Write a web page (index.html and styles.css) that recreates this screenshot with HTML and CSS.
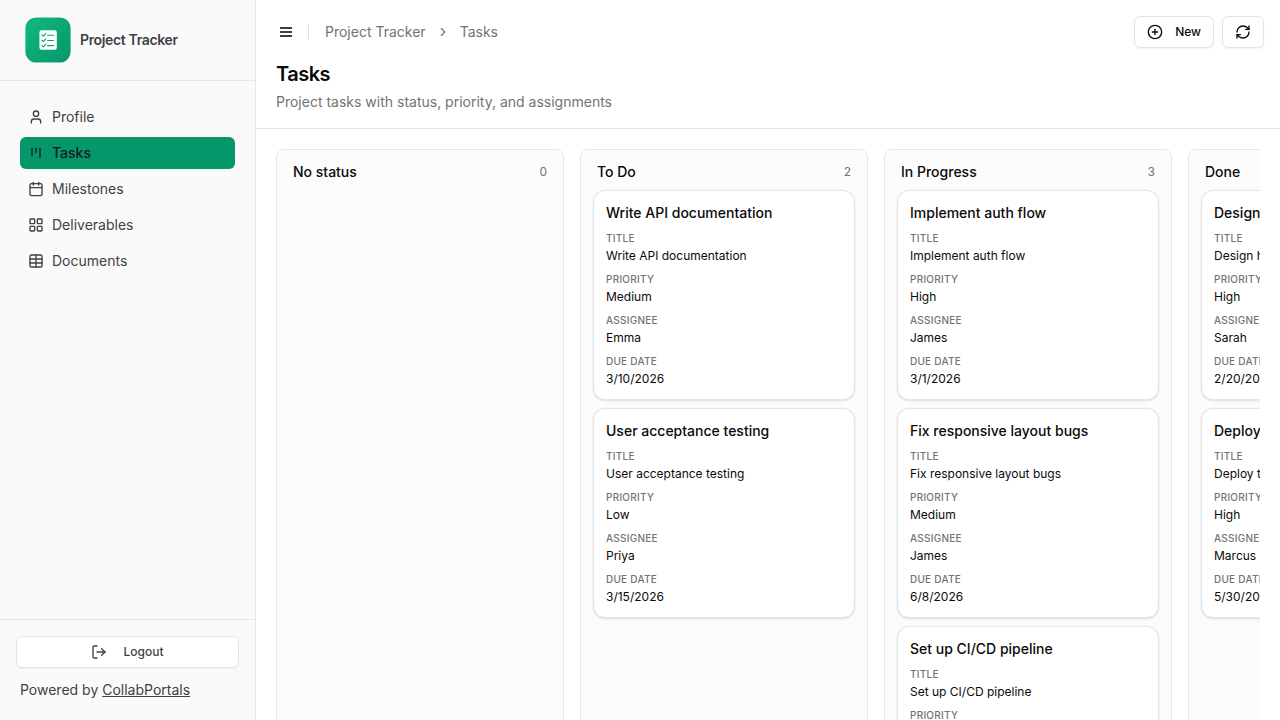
FILE: index.html
```html
<!DOCTYPE html>
<html lang="en">
<head>
    <meta charset="UTF-8">
    <meta name="viewport" content="width=device-width, initial-scale=1.0">
    <title>Tasks - Project Tracker</title>
    <link rel="stylesheet" href="styles.css">
</head>
<body>
    <div class="app">
        <aside class="sidebar">
            <div class="sidebar-header">
                <svg class="logo" viewBox="0 0 48 48">
                    <defs>
                        <linearGradient id="logoFill" x1="0" y1="0" x2="1" y2="1">
                            <stop offset="0" stop-color="#10b981"/>
                            <stop offset="1" stop-color="#059669"/>
                        </linearGradient>
                    </defs>
                    <rect x="1.4" y="1.4" width="45.2" height="45.2" rx="11" fill="url(#logoFill)"/>
                    <rect x="15.4" y="14.2" width="17.4" height="19.6" rx="2" fill="#fff"/>
                    <path d="M18 18.8l1.4 1.4 2.4-2.8M18 24.2l1.4 1.4 2.4-2.8M18 29.4l1.4 1.4 2.4-2.8M23.6 19.2h6M23.6 24.5h6M23.6 29.6h6" fill="none" stroke="#0a9f70" stroke-width="1.1" stroke-linecap="round" stroke-linejoin="round"/>
                </svg>
                <span class="brand">Project Tracker</span>
            </div>

            <nav class="nav">
                <a class="nav-item">
                    <svg class="icon" viewBox="0 0 24 24"><circle cx="12" cy="7" r="4"/><path d="M19 21v-2a4 4 0 0 0-4-4H9a4 4 0 0 0-4 4v2"/></svg>
                    Profile
                </a>
                <a class="nav-item active">
                    <svg class="icon" viewBox="0 0 24 24"><path d="M6 5v11"/><path d="M12 5v6"/><path d="M18 5v14"/></svg>
                    Tasks
                </a>
                <a class="nav-item">
                    <svg class="icon" viewBox="0 0 24 24"><path d="M8 2v4"/><path d="M16 2v4"/><rect width="18" height="18" x="3" y="4" rx="2"/><path d="M3 10h18"/></svg>
                    Milestones
                </a>
                <a class="nav-item">
                    <svg class="icon" viewBox="0 0 24 24"><rect width="7" height="7" x="3" y="3" rx="1"/><rect width="7" height="7" x="14" y="3" rx="1"/><rect width="7" height="7" x="14" y="14" rx="1"/><rect width="7" height="7" x="3" y="14" rx="1"/></svg>
                    Deliverables
                </a>
                <a class="nav-item">
                    <svg class="icon" viewBox="0 0 24 24"><path d="M12 3v18"/><rect width="18" height="18" x="3" y="3" rx="2"/><path d="M3 9h18"/><path d="M3 15h18"/></svg>
                    Documents
                </a>
            </nav>

            <div class="sidebar-footer">
                <button class="btn logout">
                    <svg class="icon" viewBox="0 0 24 24"><path d="M9 21H5a2 2 0 0 1-2-2V5a2 2 0 0 1 2-2h4"/><path d="m16 17 5-5-5-5"/><path d="M21 12H9"/></svg>
                    Logout
                </button>
                <p class="powered">Powered by <a>CollabPortals</a></p>
            </div>
        </aside>

        <main class="main">
            <header class="page-header">
                <div class="topbar">
                    <svg class="menu" viewBox="0 0 16 16"><path d="M2 3h12v2H2zM2 7h12v2H2zM2 11h12v2H2z"/></svg>
                    <span class="divider"></span>
                    <div class="breadcrumb">
                        <span>Project Tracker</span>
                        <svg class="icon chevron" viewBox="0 0 24 24"><path d="m9 18 6-6-6-6"/></svg>
                        <span>Tasks</span>
                    </div>
                    <div class="actions">
                        <button class="btn">
                            <svg class="icon" viewBox="0 0 24 24"><circle cx="12" cy="12" r="10"/><path d="M8 12h8"/><path d="M12 8v8"/></svg>
                            New
                        </button>
                        <button class="btn">
                            <svg class="icon" viewBox="0 0 24 24"><path d="M3 12a9 9 0 0 1 9-9 9.75 9.75 0 0 1 6.74 2.74L21 8"/><path d="M21 3v5h-5"/><path d="M21 12a9 9 0 0 1-9 9 9.75 9.75 0 0 1-6.74-2.74L3 16"/><path d="M8 16H3v5"/></svg>
                        </button>
                    </div>
                </div>
                <h1>Tasks</h1>
                <p class="description">Project tasks with status, priority, and assignments</p>
            </header>

            <div class="board-wrap">
                <div class="board">
                    <section class="column">
                        <div class="column-header"><h2>No status</h2><span class="count">0</span></div>
                    </section>

                    <section class="column">
                        <div class="column-header"><h2>To Do</h2><span class="count">2</span></div>
                        <article class="card">
                            <h3>Write API documentation</h3>
                            <dl>
                                <dt>Title</dt><dd>Write API documentation</dd>
                                <dt>Priority</dt><dd>Medium</dd>
                                <dt>Assignee</dt><dd>Emma</dd>
                                <dt>Due date</dt><dd>3/10/2026</dd>
                            </dl>
                        </article>
                        <article class="card">
                            <h3>User acceptance testing</h3>
                            <dl>
                                <dt>Title</dt><dd>User acceptance testing</dd>
                                <dt>Priority</dt><dd>Low</dd>
                                <dt>Assignee</dt><dd>Priya</dd>
                                <dt>Due date</dt><dd>3/15/2026</dd>
                            </dl>
                        </article>
                    </section>

                    <section class="column">
                        <div class="column-header"><h2>In Progress</h2><span class="count">3</span></div>
                        <article class="card">
                            <h3>Implement auth flow</h3>
                            <dl>
                                <dt>Title</dt><dd>Implement auth flow</dd>
                                <dt>Priority</dt><dd>High</dd>
                                <dt>Assignee</dt><dd>James</dd>
                                <dt>Due date</dt><dd>3/1/2026</dd>
                            </dl>
                        </article>
                        <article class="card">
                            <h3>Fix responsive layout bugs</h3>
                            <dl>
                                <dt>Title</dt><dd>Fix responsive layout bugs</dd>
                                <dt>Priority</dt><dd>Medium</dd>
                                <dt>Assignee</dt><dd>James</dd>
                                <dt>Due date</dt><dd>6/8/2026</dd>
                            </dl>
                        </article>
                        <article class="card">
                            <h3>Set up CI/CD pipeline</h3>
                            <dl>
                                <dt>Title</dt><dd>Set up CI/CD pipeline</dd>
                                <dt>Priority</dt><dd>High</dd>
                            </dl>
                        </article>
                    </section>

                    <section class="column">
                        <div class="column-header"><h2>Done</h2></div>
                        <article class="card">
                            <h3>Design homepage</h3>
                            <dl>
                                <dt>Title</dt><dd>Design homepage</dd>
                                <dt>Priority</dt><dd>High</dd>
                                <dt>Assignee</dt><dd>Sarah</dd>
                                <dt>Due date</dt><dd>2/20/2026</dd>
                            </dl>
                        </article>
                        <article class="card">
                            <h3>Deploy to staging</h3>
                            <dl>
                                <dt>Title</dt><dd>Deploy to staging</dd>
                                <dt>Priority</dt><dd>High</dd>
                                <dt>Assignee</dt><dd>Marcus</dd>
                                <dt>Due date</dt><dd>5/30/2026</dd>
                            </dl>
                        </article>
                    </section>
                </div>
            </div>
        </main>
    </div>
</body>
</html>
```
FILE: styles.css
```css
* {
    margin: 0;
    padding: 0;
    box-sizing: border-box;
}

body {
    font-family: Inter, sans-serif;
    font-size: 14px;
    line-height: 20px;
    color: #0a0a0a;
    background: #fff;
    overflow: hidden;
}

.app {
    display: flex;
    height: 100vh;
}

.icon {
    width: 16px;
    height: 16px;
    flex-shrink: 0;
    fill: none;
    stroke: currentColor;
    stroke-width: 2;
    stroke-linecap: round;
    stroke-linejoin: round;
}

.btn {
    display: flex;
    align-items: center;
    justify-content: center;
    gap: 12px;
    height: 32px;
    padding: 0 12px;
    font-family: inherit;
    font-size: 12px;
    font-weight: 500;
    line-height: 16px;
    color: inherit;
    background: #fff;
    border: 1px solid #e5e5e5;
    border-radius: 6px;
    box-shadow: 0 1px 2px rgba(0, 0, 0, 0.05);
}

/* Sidebar */
.sidebar {
    display: flex;
    flex-direction: column;
    width: 256px;
    flex-shrink: 0;
    color: #3f3f46;
    background: #fafafa;
    border-right: 1px solid #e5e7eb;
}

.sidebar-header {
    display: flex;
    align-items: center;
    gap: 8px;
    height: 81px;
    padding: 0 24px;
    border-bottom: 1px solid #e5e7eb;
}

.logo {
    width: 48px;
    height: 48px;
}

.brand {
    font-weight: 600;
    letter-spacing: -0.35px;
}

.nav {
    display: flex;
    flex: 1;
    flex-direction: column;
    gap: 4px;
    padding: 20px;
}

.nav-item {
    display: flex;
    align-items: center;
    gap: 8px;
    height: 32px;
    padding: 0 8px;
    border-radius: 6px;
}

.nav-item.active {
    font-weight: 500;
    color: #18181b;
    background: #059669;
}

.sidebar-footer {
    height: 101px;
    padding: 16px;
    border-top: 1px solid #e5e7eb;
}

.logout {
    width: 100%;
    gap: 16px;
}

.powered {
    padding: 12px 4px 0;
}

.powered a {
    text-decoration: underline;
}

/* Page header */
.main {
    display: flex;
    flex: 1;
    flex-direction: column;
    min-width: 0;
}

.page-header {
    height: 129px;
    padding: 16px 16px 0 20px;
    border-bottom: 1px solid #e5e5e5;
}

.topbar {
    display: flex;
    align-items: center;
    height: 32px;
}

.menu {
    width: 16px;
    height: 16px;
    margin: 0 14px 0 2px;
    fill: #3f3f46;
}

.divider {
    width: 1px;
    height: 16px;
    margin-right: 16px;
    background: #e5e5e5;
}

.breadcrumb {
    display: flex;
    align-items: center;
    gap: 10px;
    color: #737373;
}

.chevron {
    width: 14px;
    height: 14px;
}

.actions {
    display: flex;
    gap: 8px;
    margin-left: auto;
}

h1 {
    margin-top: 12px;
    font-size: 20px;
    font-weight: 600;
    line-height: 28px;
    letter-spacing: -0.5px;
}

.description {
    margin-top: 4px;
    color: #737373;
}

/* Board */
.board-wrap {
    flex: 1;
    min-height: 0;
    padding: 20px 20px 0;
}

.board {
    display: flex;
    gap: 16px;
    height: 100%;
    overflow: hidden;
}

.column {
    display: flex;
    flex-direction: column;
    gap: 8px;
    width: 288px;
    height: 800px;
    flex-shrink: 0;
    padding: 12px;
    background: #fcfcfc;
    border: 1px solid #e5e7eb;
    border-radius: 8px;
}

.column-header {
    display: flex;
    align-items: center;
    justify-content: space-between;
    height: 20px;
    padding: 0 4px;
}

h2,
h3 {
    font-size: 14px;
    font-weight: 500;
    line-height: 20px;
}

.count {
    font-size: 12px;
    line-height: 16px;
    color: #737373;
}

.card {
    padding: 12px;
    background: #fff;
    border: 1px solid #e5e5e5;
    border-radius: 12px;
    box-shadow: 0 1px 3px rgba(0, 0, 0, 0.1), 0 1px 2px -1px rgba(0, 0, 0, 0.1);
}

.card dt {
    margin-top: 8px;
    font-size: 10px;
    font-weight: 500;
    line-height: 15px;
    letter-spacing: 0.25px;
    text-transform: uppercase;
    color: #737373;
}

.card dd {
    margin-top: 2px;
    font-size: 12px;
    line-height: 16px;
}
```
